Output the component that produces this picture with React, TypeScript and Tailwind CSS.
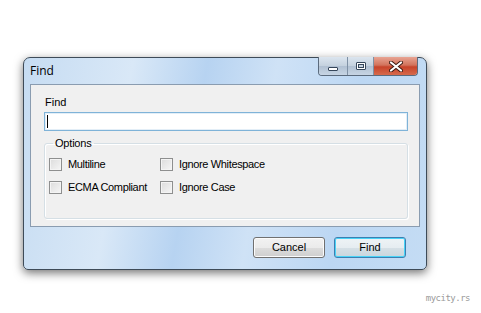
import React from 'react';

function Checkbox({ label }: { label: string }) {
  return (
    <label className="flex items-center h-[13px]">
      <span className="w-[13px] h-[13px] border border-[#8e8f8f] bg-[linear-gradient(135deg,#dcdcdc,#f6f6f6)] shadow-[inset_0_0_0_1px_#f4f4f4] shrink-0" />
      <span className="ml-[6px] text-[11px] leading-none tracking-[-0.35px] text-black whitespace-nowrap">{label}</span>
    </label>
  );
}

export default function App() {
  return (
    <div className="w-[481px] h-[313px] bg-white overflow-hidden flex flex-col font-['Liberation_Sans',Arial,sans-serif]">
      {/* Window */}
      <div className="ml-[23px] mt-[57px] w-[404px] h-[213px] flex flex-col rounded-t-[7px] rounded-b-[5px] border border-[#3e4b58] bg-[linear-gradient(100deg,#c6dcf2_0%,#d9e8f7_25%,#b7d3f1_42%,#cfe2f6_58%,#bcd7f3_78%,#c4dcf4_100%)] shadow-[0_3px_10px_rgba(0,0,0,0.55)]">
        {/* Title bar */}
        <div className="h-[26px] flex items-start justify-between pl-[6px] pr-[8px]">
          <span className="mt-[6px] text-[12px] leading-[14px] text-black font-['Open_Sans',sans-serif]">Find</span>
          <div className="flex h-[19px] -mt-[1px] border border-[#5b6b7d] border-t-0 rounded-b-[4px] overflow-hidden">
            <div className="w-[29px] flex items-center justify-center bg-[linear-gradient(#dbe5ef,#c4d1de_50%,#b0c0d2_51%,#c7d5e4)] border-r border-[#7f91a5]">
              <span className="w-[10px] h-[4px] mt-[5px] bg-white border border-[#35465a] rounded-[1px]" />
            </div>
            <div className="w-[26px] flex items-center justify-center bg-[linear-gradient(#dbe5ef,#c4d1de_50%,#b0c0d2_51%,#c7d5e4)] border-r border-[#7f91a5]">
              <span className="w-[10px] h-[8px] border border-[#35465a] bg-white flex items-center justify-center rounded-[1px]">
                <span className="w-[6px] h-[4px] border border-[#35465a] bg-[#c8d4e0]" />
              </span>
            </div>
            <div className="w-[43px] flex items-center justify-center bg-[linear-gradient(#e8a493,#d2735c_45%,#c7432a_55%,#d66a4c)]">
              <svg width="14" height="11" viewBox="0 0 14 11">
                <path d="M2 1.5 L12 9.5 M12 1.5 L2 9.5" stroke="#3b1a12" strokeWidth="4" strokeLinecap="round" />
                <path d="M2 1.5 L12 9.5 M12 1.5 L2 9.5" stroke="#ffffff" strokeWidth="2.2" strokeLinecap="round" />
              </svg>
            </div>
          </div>
        </div>

        {/* Client area */}
        <div className="mx-[6px] h-[143px] border border-[#8a9cb0] bg-[#f0f0f0] flex flex-col pl-[13px] pr-[11px]">
          <span className="mt-[11px] ml-[1px] text-[11px] leading-[13px] text-black">Find</span>
          <div className="mt-[3px] h-[19px] border border-[#7fb3d8] bg-white flex items-center pl-[2px] shadow-[inset_0_0_0_1px_#e3eef7]">
            <span className="w-[1px] h-[13px] bg-black" />
          </div>
          <fieldset className="mt-[6px] h-[82px] border border-[#d5dfe5] rounded-[3px] shadow-[inset_1px_1px_0_#fff,1px_1px_0_#fff] pl-[4px]">
            <legend className="ml-[4px] px-[2px] text-[11px] leading-[13px] tracking-[-0.2px] text-black">Options</legend>
            <div className="grid grid-cols-[111px_1fr] gap-y-[10px] mt-[8px]">
              <Checkbox label="Multiline" />
              <Checkbox label="Ignore Whitespace" />
              <Checkbox label="ECMA Compliant" />
              <Checkbox label="Ignore Case" />
            </div>
          </fieldset>
        </div>

        {/* Buttons */}
        <div className="flex justify-end gap-[9px] mt-[10px] pr-[20px]">
          <button className="w-[72px] h-[21px] rounded-[3px] border border-[#707070] bg-[linear-gradient(#f2f2f2,#ebebeb_50%,#dddddd_51%,#cfcfcf)] shadow-[inset_0_0_0_1px_#fbfbfb] text-[11px] text-black">
            Cancel
          </button>
          <button className="w-[72px] h-[21px] rounded-[3px] border border-[#3c7fb1] bg-[linear-gradient(#eef3f6,#e6edf1_50%,#d6e0e6_51%,#c9d6dd)] shadow-[inset_0_0_0_1px_#48d3f7] text-[11px] text-black">
            Find
          </button>
        </div>
      </div>

      {/* Watermark */}
      <div className="flex justify-end pr-[11px] mt-[23px]">
        <span className="text-[9px] leading-[10px] text-[#9a9a9a] font-['DejaVu_Sans_Mono',monospace] tracking-[-0.5px]">mycity.rs</span>
      </div>
    </div>
  );
}
